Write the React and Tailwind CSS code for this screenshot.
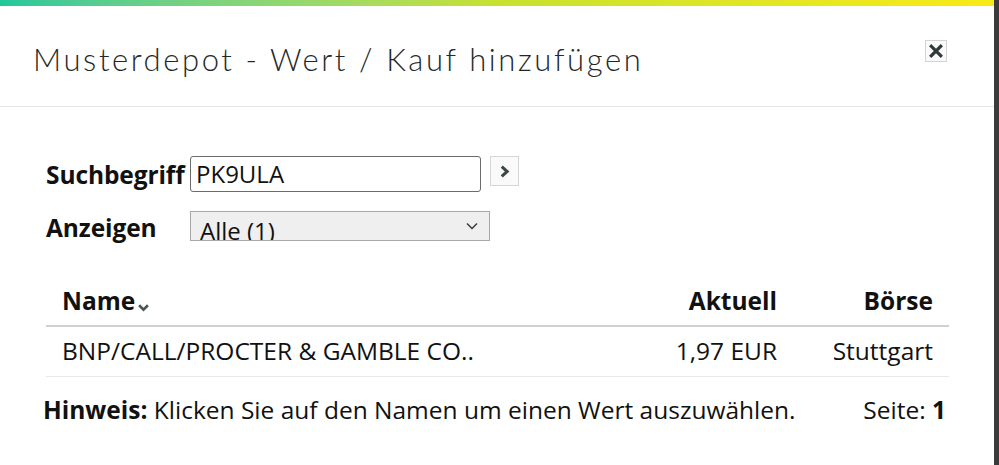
import React from "react";

function CloseButton() {
  return (
    <button className="w-[22px] h-[22px] flex items-center justify-center border border-[#d4d4d4] bg-[#fafafa]">
      <svg viewBox="0 0 12 12" className="w-[14px] h-[14px]" stroke="#2f3a3a" strokeWidth="2.8" strokeLinecap="square">
        <path d="M2 2l8 8M10 2l-8 8" />
      </svg>
    </button>
  );
}

export default function App() {
  return (
    <div className="w-[999px] h-[465px] flex bg-[#3b3b3b] overflow-hidden" style={{ fontFamily: '"Open Sans", sans-serif' }}>
      <div className="w-[994px] h-full bg-white flex flex-col">
        <div className="h-[6px] bg-gradient-to-r from-[#1fc79c] via-[#c6e12e] to-[#f8ea16]" />

        {/* Header */}
        <div className="h-[101px] border-b border-[#e6e6e6] flex items-start justify-between pl-[33px] pr-[47px]">
          <h1 className="mt-[32px] text-[31px] leading-[42px] text-[#1f2928] font-light tracking-[2.6px]" style={{ fontFamily: 'Lato, sans-serif' }}>
            Musterdepot - Wert / Kauf hinzufügen
          </h1>
          <div className="mt-[34px]">
            <CloseButton />
          </div>
        </div>

        {/* Form */}
        <div className="pl-[46px] pt-[49px] flex flex-col gap-[19px]">
          <div className="flex items-center h-[36px]">
            <label className="w-[144px] mt-[3px] text-[24.5px] font-bold text-[#111] tracking-[-0.1px]">Suchbegriff</label>
            <input
              readOnly
              value="PK9ULA"
              className="w-[291px] h-[36px] border border-[#6b6b6b] rounded-[3px] px-[5px] text-[24px] text-[#111] outline-none"
            />
            <button className="ml-[9px] self-start w-[29px] h-[30px] border border-[#d6d6d6] bg-[#fafafa] flex items-center justify-center">
              <svg viewBox="0 0 10 12" className="w-[12px] h-[13px]" fill="none" stroke="#3d4747" strokeWidth="2.8">
                <path d="M2 1.5l5 4.5-5 4.5" />
              </svg>
            </button>
          </div>
          <div className="flex items-center h-[30px]">
            <label className="w-[144px] mt-[4px] text-[24.5px] font-bold text-[#111] tracking-[-0.1px]">Anzeigen</label>
            <div className="w-[300px] h-[30px] bg-[#efefef] border border-[#a8a8a8] flex items-start justify-between pl-[9px] pr-[11px] overflow-hidden">
              <span className="text-[24px] leading-[30px] mt-[4px] text-[#111]">Alle (1)</span>
              <svg viewBox="0 0 12 8" className="w-[12px] h-[8px] mt-[10px]" fill="none" stroke="#333" strokeWidth="1.3">
                <path d="M1 1.5l5 5 5-5" />
              </svg>
            </div>
          </div>
        </div>

        {/* Table */}
        <div className="ml-[46px] w-[903px] mt-[41px]">
          <div className="flex items-center h-[45px] pb-[4px] border-b-2 border-[#d0d0d0] px-[16px] text-[24.5px] font-bold text-[#111]">
            <div className="flex-1 flex items-center">
              <span>Name</span>
              <svg viewBox="0 0 10 7" className="w-[11px] h-[8px] ml-[3px] mt-[12px]" fill="none" stroke="#4a5555" strokeWidth="2.4">
                <path d="M1 1l4 4 4-4" />
              </svg>
            </div>
            <div className="w-[200px] text-right">Aktuell</div>
            <div className="w-[156px] text-right">Börse</div>
          </div>
          <div className="flex items-center h-[50px] border-b border-[#e8e8e8] px-[16px] text-[24.5px] text-[#111]">
            <div className="flex-1">BNP/CALL/PROCTER &amp; GAMBLE CO..</div>
            <div className="w-[200px] text-right">1,97 EUR</div>
            <div className="w-[156px] text-right">Stuttgart</div>
          </div>
        </div>

        <div className="ml-[43px] w-[903px] mt-[15px] flex items-center justify-between text-[24.5px] text-[#111]">
          <div>
            <span className="font-bold">Hinweis:</span> Klicken Sie auf den Namen um einen Wert auszuwählen.
          </div>
          <div>
            Seite: <span className="font-bold">1</span>
          </div>
        </div>
      </div>
    </div>
  );
}
